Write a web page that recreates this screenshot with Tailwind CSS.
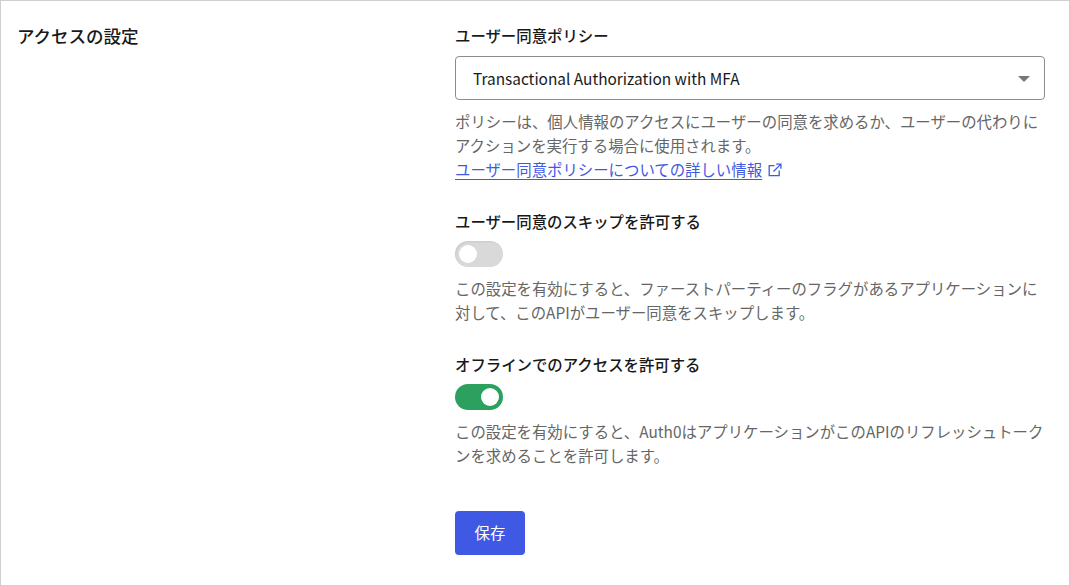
<!doctype html>
<html lang="ja"><head><meta charset="utf-8">
<script src="https://cdn.jsdelivr.net/npm/@tailwindcss/browser@4"></script>
</head>
<body class="bg-white font-['Noto_Sans_CJK_JP','Noto_Sans',sans-serif]">
<div class="w-[1070px] h-[586px] overflow-hidden border border-[#cfcfcf] flex text-[#191919]">
  <div class="w-[454px] pl-[16px] pt-[21px]">
    <h2 class="text-[17.5px] leading-[28px] font-medium">アクセスの設定</h2>
  </div>
  <div class="w-[590px] pt-[22px]">
    <label class="block text-[15.4px] leading-[24px] font-medium">ユーザー同意ポリシー</label>
    <div class="mt-[9px] h-[44px] rounded-[4px] border border-[#8c8c8c] flex items-center justify-between pl-[17px] pr-[14px] pt-[2px] text-[15.4px]">
      <span>Transactional Authorization with MFA</span>
      <span class="w-0 h-0 border-x-[6px] border-x-transparent border-t-[6px] border-t-[#77777c]"></span>
    </div>
    <p class="mt-[9px] text-[15.4px] leading-[24px] text-[#666666]">ポリシーは、個人情報のアクセスにユーザーの同意を求めるか、ユーザーの代わりにアクションを実行する場合に使用されます。<br>
      <a class="text-[#3f59e4] underline underline-offset-[3px]">ユーザー同意ポリシーについての詳しい情報</a><svg class="inline-block ml-[6px] align-[-1px]" width="14" height="14" viewBox="0 0 14 14" fill="none" stroke="#3f59e4" stroke-width="1.3"><path d="M6.5 2.7H1.2v10h10V7.5"/><path d="M5.5 8.5 12.4 1.6M8.2 1.1h4.7v4.7"/></svg>
    </p>
    <label class="block mt-[28px] text-[15.4px] leading-[24px] font-medium">ユーザー同意のスキップを許可する</label>
    <div class="mt-[8px] w-[48px] h-[26px] rounded-full bg-[#d9d9d9] shadow-[inset_1px_1px_2px_rgba(0,0,0,0.08)] flex items-center pl-[4px]"><span class="w-[18px] h-[18px] rounded-full bg-white"></span></div>
    <p class="mt-[9px] text-[15.4px] leading-[24px] text-[#666666]">この設定を有効にすると、ファーストパーティーのフラグがあるアプリケーションに対して、このAPIがユーザー同意をスキップします。</p>
    <label class="block mt-[28px] text-[15.4px] leading-[24px] font-medium">オフラインでのアクセスを許可する</label>
    <div class="mt-[8px] w-[48px] h-[26px] rounded-full bg-[#2ca05f] flex items-center justify-end pr-[4px]"><span class="w-[18px] h-[18px] rounded-full bg-white"></span></div>
    <p class="mt-[9px] text-[15.4px] leading-[24px] text-[#666666]">この設定を有効にすると、Auth0はアプリケーションがこのAPIのリフレッシュトークンを求めることを許可します。</p>
    <button class="mt-[44px] w-[70px] h-[44px] rounded-[4px] bg-[#3f59e4] text-white text-[15.4px] font-normal">保存</button>
  </div>
</div>
</body></html>
